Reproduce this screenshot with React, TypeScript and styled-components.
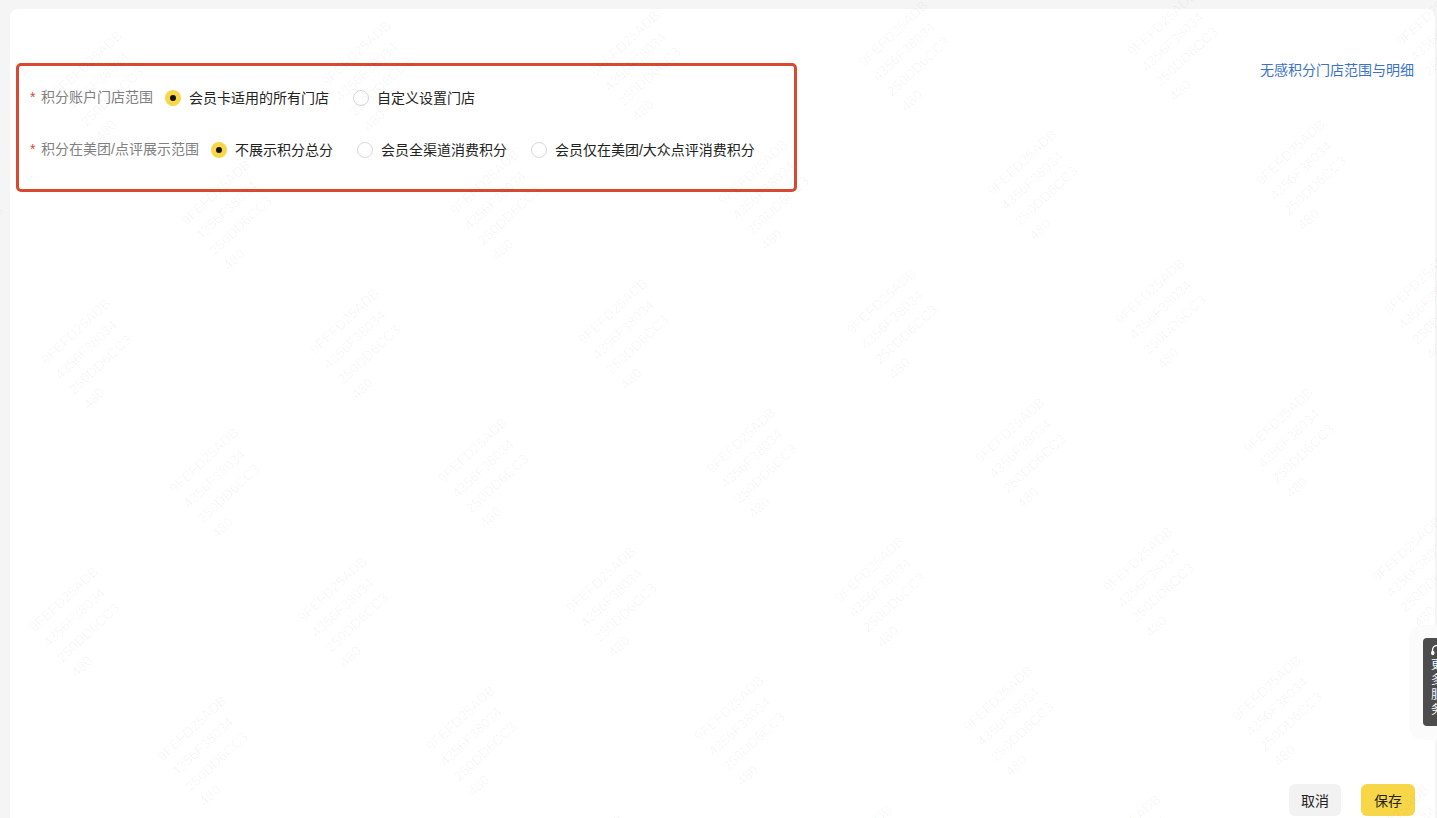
import React from "react";
import styled, { createGlobalStyle } from "styled-components";

const Global = createGlobalStyle`
  html, body { margin: 0; padding: 0; height: 100%; overflow: hidden; background: #f5f5f5; }
  #root { height: 100%; }
  * { box-sizing: border-box; }
`;

const FONT = `"Liberation Sans", "Noto Sans CJK SC", sans-serif`;

const Page = styled.div`
  position: relative;
  width: 1437px;
  height: 818px;
  padding: 9px 2px 0 10px;
  overflow: hidden;
  font-family: ${FONT};
`;

const Card = styled.main`
  height: 809px;
  background: #fff;
  border-radius: 8px 8px 0 0;
  display: flex;
  flex-direction: column;
  padding: 54px 20px 0 6px;
`;

const TopArea = styled.section`
  display: flex;
  justify-content: space-between;
  align-items: flex-start;
`;

const Highlight = styled.div`
  width: 781px;
  height: 129px;
  border: 3px solid #d9492f;
  border-radius: 5px;
  padding: 17px 0 0 11px;
  display: flex;
  flex-direction: column;
  gap: 22px;
`;

const Row = styled.div`
  display: flex;
  align-items: center;
  height: 30px;
`;

const Label = styled.label`
  font-size: 14px;
  line-height: 20px;
  color: #808080;
  margin-right: 12px;
  white-space: nowrap;
  position: relative;
  top: -1px;
  display: flex;
  align-items: center;
`;

const Star = styled.span`
  color: #d9492f;
  width: 11px;
  flex: none;
`;

const Radio = styled.div<{ $gap: number }>`
  display: flex;
  align-items: center;
  margin-right: ${(p) => p.$gap}px;
`;

const Dot = styled.span<{ $on?: boolean }>`
  width: 16px;
  height: 16px;
  border-radius: 50%;
  margin-right: 8px;
  flex: none;
  display: flex;
  align-items: center;
  justify-content: center;
  background: ${(p) => (p.$on ? "#f7d748" : "#fff")};
  border: ${(p) => (p.$on ? "none" : "1px solid #d9d9d9")};
  &::after {
    content: "";
    display: ${(p) => (p.$on ? "block" : "none")};
    width: 6px;
    height: 6px;
    border-radius: 50%;
    background: #111;
  }
`;

const Option = styled.span`
  font-size: 14px;
  line-height: 20px;
  color: #222;
  white-space: nowrap;
`;

const Link = styled.a`
  font-size: 14px;
  line-height: 20px;
  color: #3b72c8;
  white-space: nowrap;
  margin: -3px 1px 0 0;
`;

const Footer = styled.footer`
  margin-top: auto;
  height: 34px;
  display: flex;
  justify-content: flex-end;
  gap: 20px;
  align-items: flex-start;
`;

const Button = styled.button<{ $primary?: boolean }>`
  border: none;
  border-radius: 6px;
  height: 32px;
  width: ${(p) => (p.$primary ? 54 : 52)}px;
  padding: 0;
  font-family: ${FONT};
  font-size: 14px;
  color: #222;
  background: ${(p) => (p.$primary ? "#f7d748" : "#f2f2f3")};
`;

const Watermarks = styled.svg`
  position: absolute;
  inset: 0;
  pointer-events: none;
`;

const MarkText = styled.text`
  font-family: "Liberation Sans", sans-serif;
  font-size: 14px;
  fill: #000;
  fill-opacity: 0.045;
`;

const ServiceHalo = styled.div`
  position: absolute;
  right: 0;
  top: 625px;
  width: 28px;
  height: 115px;
  border-radius: 14px 0 0 14px;
  background: #fbfbfb;
`;

const ServiceTab = styled.aside`
  position: absolute;
  right: 0;
  top: 638px;
  width: 14px;
  height: 88px;
  border-radius: 4px 0 0 4px;
  background: #4d4d4d;
  color: #fff;
  font-size: 12px;
  line-height: 15px;
  padding: 7px 0 0 8px;
  display: flex;
  flex-direction: column;
  overflow: hidden;
`;

const ServiceChar = styled.span`
  display: block;
  width: 12px;
  flex: none;
`;

const HeadsetIcon = styled.svg`
  flex: none;
  margin-bottom: 1px;
`;

const marks: [number, number][] = [];
for (let i = -3; i < 9; i++) {
  for (let j = -8; j < 8; j++) {
    const x = 46.5 + i * 128.3 + j * 140.3;
    const y = 365 + i * 129 - j * 139;
    if (x > -110 && x < 1437 && y > -10 && y < 900) marks.push([x, y]);
  }
}

const lines = ["9FEFD25ADB", "4356F38034", "250DD6CC3", "480"];

const Mark = ({ x, y }: { x: number; y: number }) => (
  <g transform={`translate(${x} ${y}) rotate(-43)`}>
    {lines.map((t, n) => (
      <MarkText key={t} x="0" y={n * 20.5}>{t}</MarkText>
    ))}
  </g>
);

export default function App() {
  return (
    <Page>
      <Global />
      <Card>
        <TopArea>
          <Highlight>
            <Row>
              <Label><Star>*</Star>积分账户门店范围</Label>
              <Radio $gap={24}><Dot $on /><Option>会员卡适用的所有门店</Option></Radio>
              <Radio $gap={0}><Dot /><Option>自定义设置门店</Option></Radio>
            </Row>
            <Row>
              <Label><Star>*</Star>积分在美团/点评展示范围</Label>
              <Radio $gap={24}><Dot $on /><Option>不展示积分总分</Option></Radio>
              <Radio $gap={24}><Dot /><Option>会员全渠道消费积分</Option></Radio>
              <Radio $gap={0}><Dot /><Option>会员仅在美团/大众点评消费积分</Option></Radio>
            </Row>
          </Highlight>
          <Link>无感积分门店范围与明细</Link>
        </TopArea>
        <Footer>
          <Button>取消</Button>
          <Button $primary>保存</Button>
        </Footer>
      </Card>
      <Watermarks width="1437" height="818">
        {marks.map(([x, y]) => <Mark key={`${x}-${y}`} x={x} y={y} />)}
      </Watermarks>
      <ServiceHalo />
      <ServiceTab>
        <HeadsetIcon width="12" height="12" viewBox="0 0 12 12" fill="none" stroke="#fff" strokeWidth="1.3">
          <path d="M1.5 7V5a4.5 4.5 0 0 1 9 0v2" />
          <rect x="0.8" y="6.5" width="2" height="3" rx="1" fill="#fff" />
        </HeadsetIcon>
        <ServiceChar>更</ServiceChar>
        <ServiceChar>多</ServiceChar>
        <ServiceChar>服</ServiceChar>
        <ServiceChar>务</ServiceChar>
      </ServiceTab>
    </Page>
  );
}
